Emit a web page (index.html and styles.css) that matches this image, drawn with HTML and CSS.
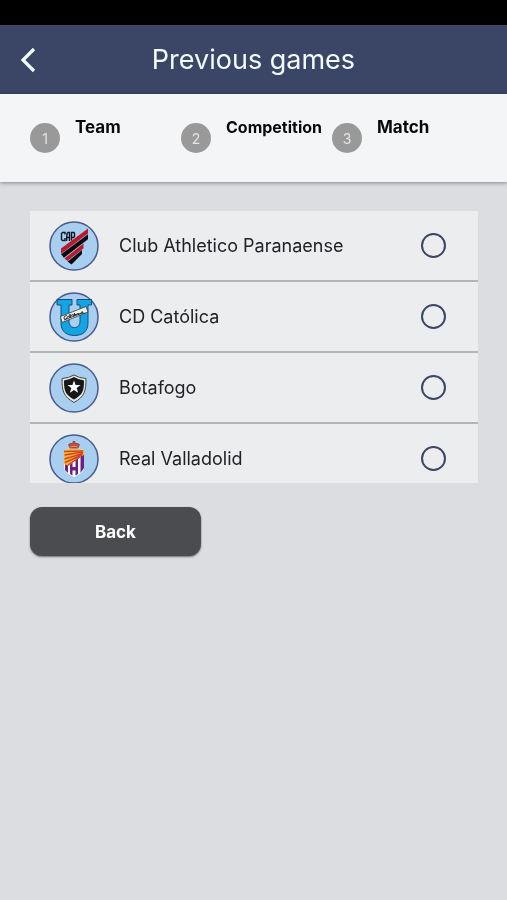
FILE: index.html
```html
<!DOCTYPE html>
<html lang="en">
<head>
    <meta charset="UTF-8">
    <meta name="viewport" content="width=device-width, initial-scale=1.0">
    <title>Previous games</title>
    <link rel="stylesheet" href="styles.css">
</head>
<body>
    <div class="status-bar"></div>

    <!-- Header -->
    <header class="header">
        <button type="button" class="header-back" aria-label="Go back">
            <svg width="16" height="26" viewBox="0 0 16 26" fill="none" stroke="#f2fbff" stroke-width="3.200">
                <path d="M14 2 3 13 14 24"/>
            </svg>
        </button>
        <h1 class="title">Previous games</h1>
    </header>

    <!-- Steps -->
    <ol class="steps">
        <li class="step"><span class="step-number">1</span><span class="step-name">Team</span></li>
        <li class="step"><span class="step-number">2</span><span class="step-name step-name-small">Competition</span></li>
        <li class="step"><span class="step-number">3</span><span class="step-name">Match</span></li>
    </ol>

    <!-- Team list -->
    <main class="content">
        <form>
            <div class="team-list">
                <label class="team" for="team1">
                    <svg class="badge" viewBox="0 0 50 50">
                        <circle cx="25" cy="25" r="24" fill="#a9cff0" stroke="#4b5c8c" stroke-width="1.500"/>
                        <path fill="#b9182f" d="M12 27.500 39 7.500v5L12 33z"/>
                        <path fill="#090b10" d="M12 33 39 13v5.500L15 37z"/>
                        <path fill="#b9182f" d="M15.500 37.500 34.500 22.500v5L18.500 40z"/>
                        <path fill="#090b10" d="M18.500 40.500 33 28.500v4.500L22.500 43.500z"/>
                        <path fill="none" stroke="#c5cbd8" stroke-width=".5" d="M12 33 39 13M15 37 39 18.500M18.500 40.200 34 28"/>
                        <g fill="none" stroke="#10151f" stroke-width="1.400">
                            <path d="M16 13.500v-2h-2.500l-1 1v6l1 1H16v-2.500"/>
                            <path d="m17.500 20 .5-7.500 1-1h1.500V20M18 16.500h2.500"/>
                            <path d="M22.500 19.500v-8H25l.5 1v3l-1 1h-2"/>
                        </g>
                    </svg>
                    <span class="team-name">Club Athletico Paranaense</span>
                    <input type="radio" class="radio" id="team1" name="team" value="1">
                </label>

                <label class="team" for="team2">
                    <svg class="badge" viewBox="0 0 50 50">
                        <circle cx="25" cy="25" r="24" fill="#a9cff0" stroke="#4b5c8c" stroke-width="1.500"/>
                        <path fill="#12a4e3" stroke="#194c76" stroke-width="1" d="M8 7.500h15v5.500h-3v16c0 4 2 6.500 5.500 6.500S31 33 31 29V13h-3V7.500h14.500V13H39v18c0 8-5 12.500-13.500 12.500S12 39 12 31V13H8z"/>
                        <path fill="#f1eee6" stroke="#343d49" stroke-width=".8" d="m11.500 24.500 25.500-10 2 5.500-26 10.500z"/>
                        <path fill="none" stroke="#252b35" stroke-width=".9" d="M18 23.500q-3 0-3 2.500t3 0q0-1.500 1.500-2l1 1.500.5-3.500.5 3q0-2 2.500-2.500l.5 1.500 1-3v3l1-2 .5 1q1-2 2.500-1.500l-.5 1q2 0 3-2 1-1 2-.5l-1 1.500 2.500-.5M15 28l18-7"/>
                    </svg>
                    <span class="team-name">CD Católica</span>
                    <input type="radio" class="radio" id="team2" name="team" value="2">
                </label>

                <label class="team" for="team3">
                    <svg class="badge" viewBox="0 0 50 50">
                        <circle cx="25" cy="25" r="24" fill="#a9cff0" stroke="#4b5c8c" stroke-width="1.500"/>
                        <path fill="#e9e4dc" stroke="#45474b" stroke-width="1" d="M25 12q5 3 12 3.500c0 12-1 18-12 24-11-6-12-12-12-24Q20 15 25 12z"/>
                        <path fill="#17181a" d="M25 14q5 3 10 3.500c0 10-1 14-10 19-9-5-10-9-10-19Q20 17 25 14z"/>
                        <path fill="#fff" d="m25 17.500 1.600 4.500h4.900l-3.800 3 1.400 4.700-4.100-2.700-4.100 2.700 1.400-4.700-3.800-3h4.900z"/>
                    </svg>
                    <span class="team-name">Botafogo</span>
                    <input type="radio" class="radio" id="team3" name="team" value="3">
                </label>

                <label class="team" for="team4">
                    <svg class="badge" viewBox="0 0 50 50">
                        <circle cx="25" cy="25" r="24" fill="#a9cff0" stroke="#4b5c8c" stroke-width="1.500"/>
                        <path fill="#fff" d="M15 16q10-2.500 20 0v17c0 5-4 7-10 10-6-3-10-5-10-10z"/>
                        <path fill="#6c2182" d="M16 29h3v10l-3-3zM21 27h2.500v6h3v-8H29v15l-2.500 1.500v-5h-3v5L21 40zM31.500 20H35v14l-3.500 5z"/>
                        <path fill="#f5b72f" d="M15 16q10-2.500 20 0v5L28 24l-8 8-5-2z"/>
                        <path fill="none" stroke="#d3402b" stroke-width="1.500" d="m15 17.500 19-.5M15.500 21 34 18M15.500 25 34 19.500M16 28.500 33 21M19 31l12-8"/>
                        <path fill="#c84b43" stroke="#85404c" stroke-width=".8" d="m21 14-1.500-3.500Q22 8.500 24 10V7.500h2V10q2-1.500 4.500.5L29 14z"/>
                        <path fill="none" stroke="#d9a13e" stroke-width="1" d="M21.500 13q3.500-1.500 7 0"/>
                    </svg>
                    <span class="team-name">Real Valladolid</span>
                    <input type="radio" class="radio" id="team4" name="team" value="4">
                </label>
            </div>
            <button type="button" class="button">Back</button>
        </form>
    </main>
</body>
</html>
```
FILE: styles.css
```css
body {
    margin: 0;
    min-height: 100vh;
    background-color: #dcdde1;
    color: #202226;
    font-family: Inter, Roboto, sans-serif;
}

.status-bar {
    height: 25px;
    background-color: #000;
}

.header {
    display: grid;
    grid-template-columns: 56px 1fr 56px;
    align-items: center;
    height: 69px;
    background-color: #3b4566;
}

.header-back {
    display: flex;
    justify-content: center;
    padding: 10px;
    border: none;
    background: none;
    cursor: pointer;
}

.title {
    margin: 0;
    color: #f2fbff;
    font-size: 27px;
    font-weight: 400;
    text-align: center;
}

/* Steps */
.steps {
    display: grid;
    grid-template-columns: repeat(3, 1fr);
    margin: 0;
    padding: 22px 24px 29px 30px;
    background-color: #f4f5f7;
    box-shadow: 0 1px 4px rgba(0, 0, 0, 0.4);
    list-style: none;
}

.step {
    display: flex;
    align-items: flex-end;
    gap: 15px;
    height: 37px;
}

.step-number {
    display: flex;
    align-items: center;
    justify-content: center;
    flex: none;
    width: 30px;
    height: 30px;
    border-radius: 50%;
    background-color: #999;
    color: #e4e4e4;
    font-size: 14px;
}

.step-name {
    align-self: flex-start;
    color: #08090b;
    font-size: 17px;
    font-weight: 700;
    line-height: 22px;
}

.step-name-small {
    font-size: 16px;
}

/* Team list */
.content {
    padding: 29px 29px 29px 30px;
}

.team-list {
    max-height: 272px;
    overflow-y: auto;
    scrollbar-width: none;
}

.team {
    display: flex;
    align-items: center;
    gap: 20px;
    box-sizing: border-box;
    height: 71px;
    padding: 0 32px 0 19px;
    border-bottom: 2px solid #b3b4b6;
    background-color: #ecedef;
    cursor: pointer;
}

.badge {
    flex: none;
    width: 50px;
    height: 50px;
}

.team-name {
    flex: 1;
    font-size: 18px;
}

.radio {
    appearance: none;
    flex: none;
    width: 25px;
    height: 25px;
    margin: 0;
    border: 2px solid #3b4566;
    border-radius: 50%;
}

.radio:checked {
    background-color: #3b4566;
    box-shadow: inset 0 0 0 4px #ecedef;
}

.button {
    display: block;
    width: 171px;
    height: 49px;
    margin-top: 24px;
    border: none;
    border-radius: 12px;
    background-color: #4b4c4f;
    box-shadow: 0 1px 2px rgba(0, 0, 0, 0.5);
    color: #fff;
    font-family: inherit;
    font-size: 17px;
    font-weight: 700;
    cursor: pointer;
}
```
